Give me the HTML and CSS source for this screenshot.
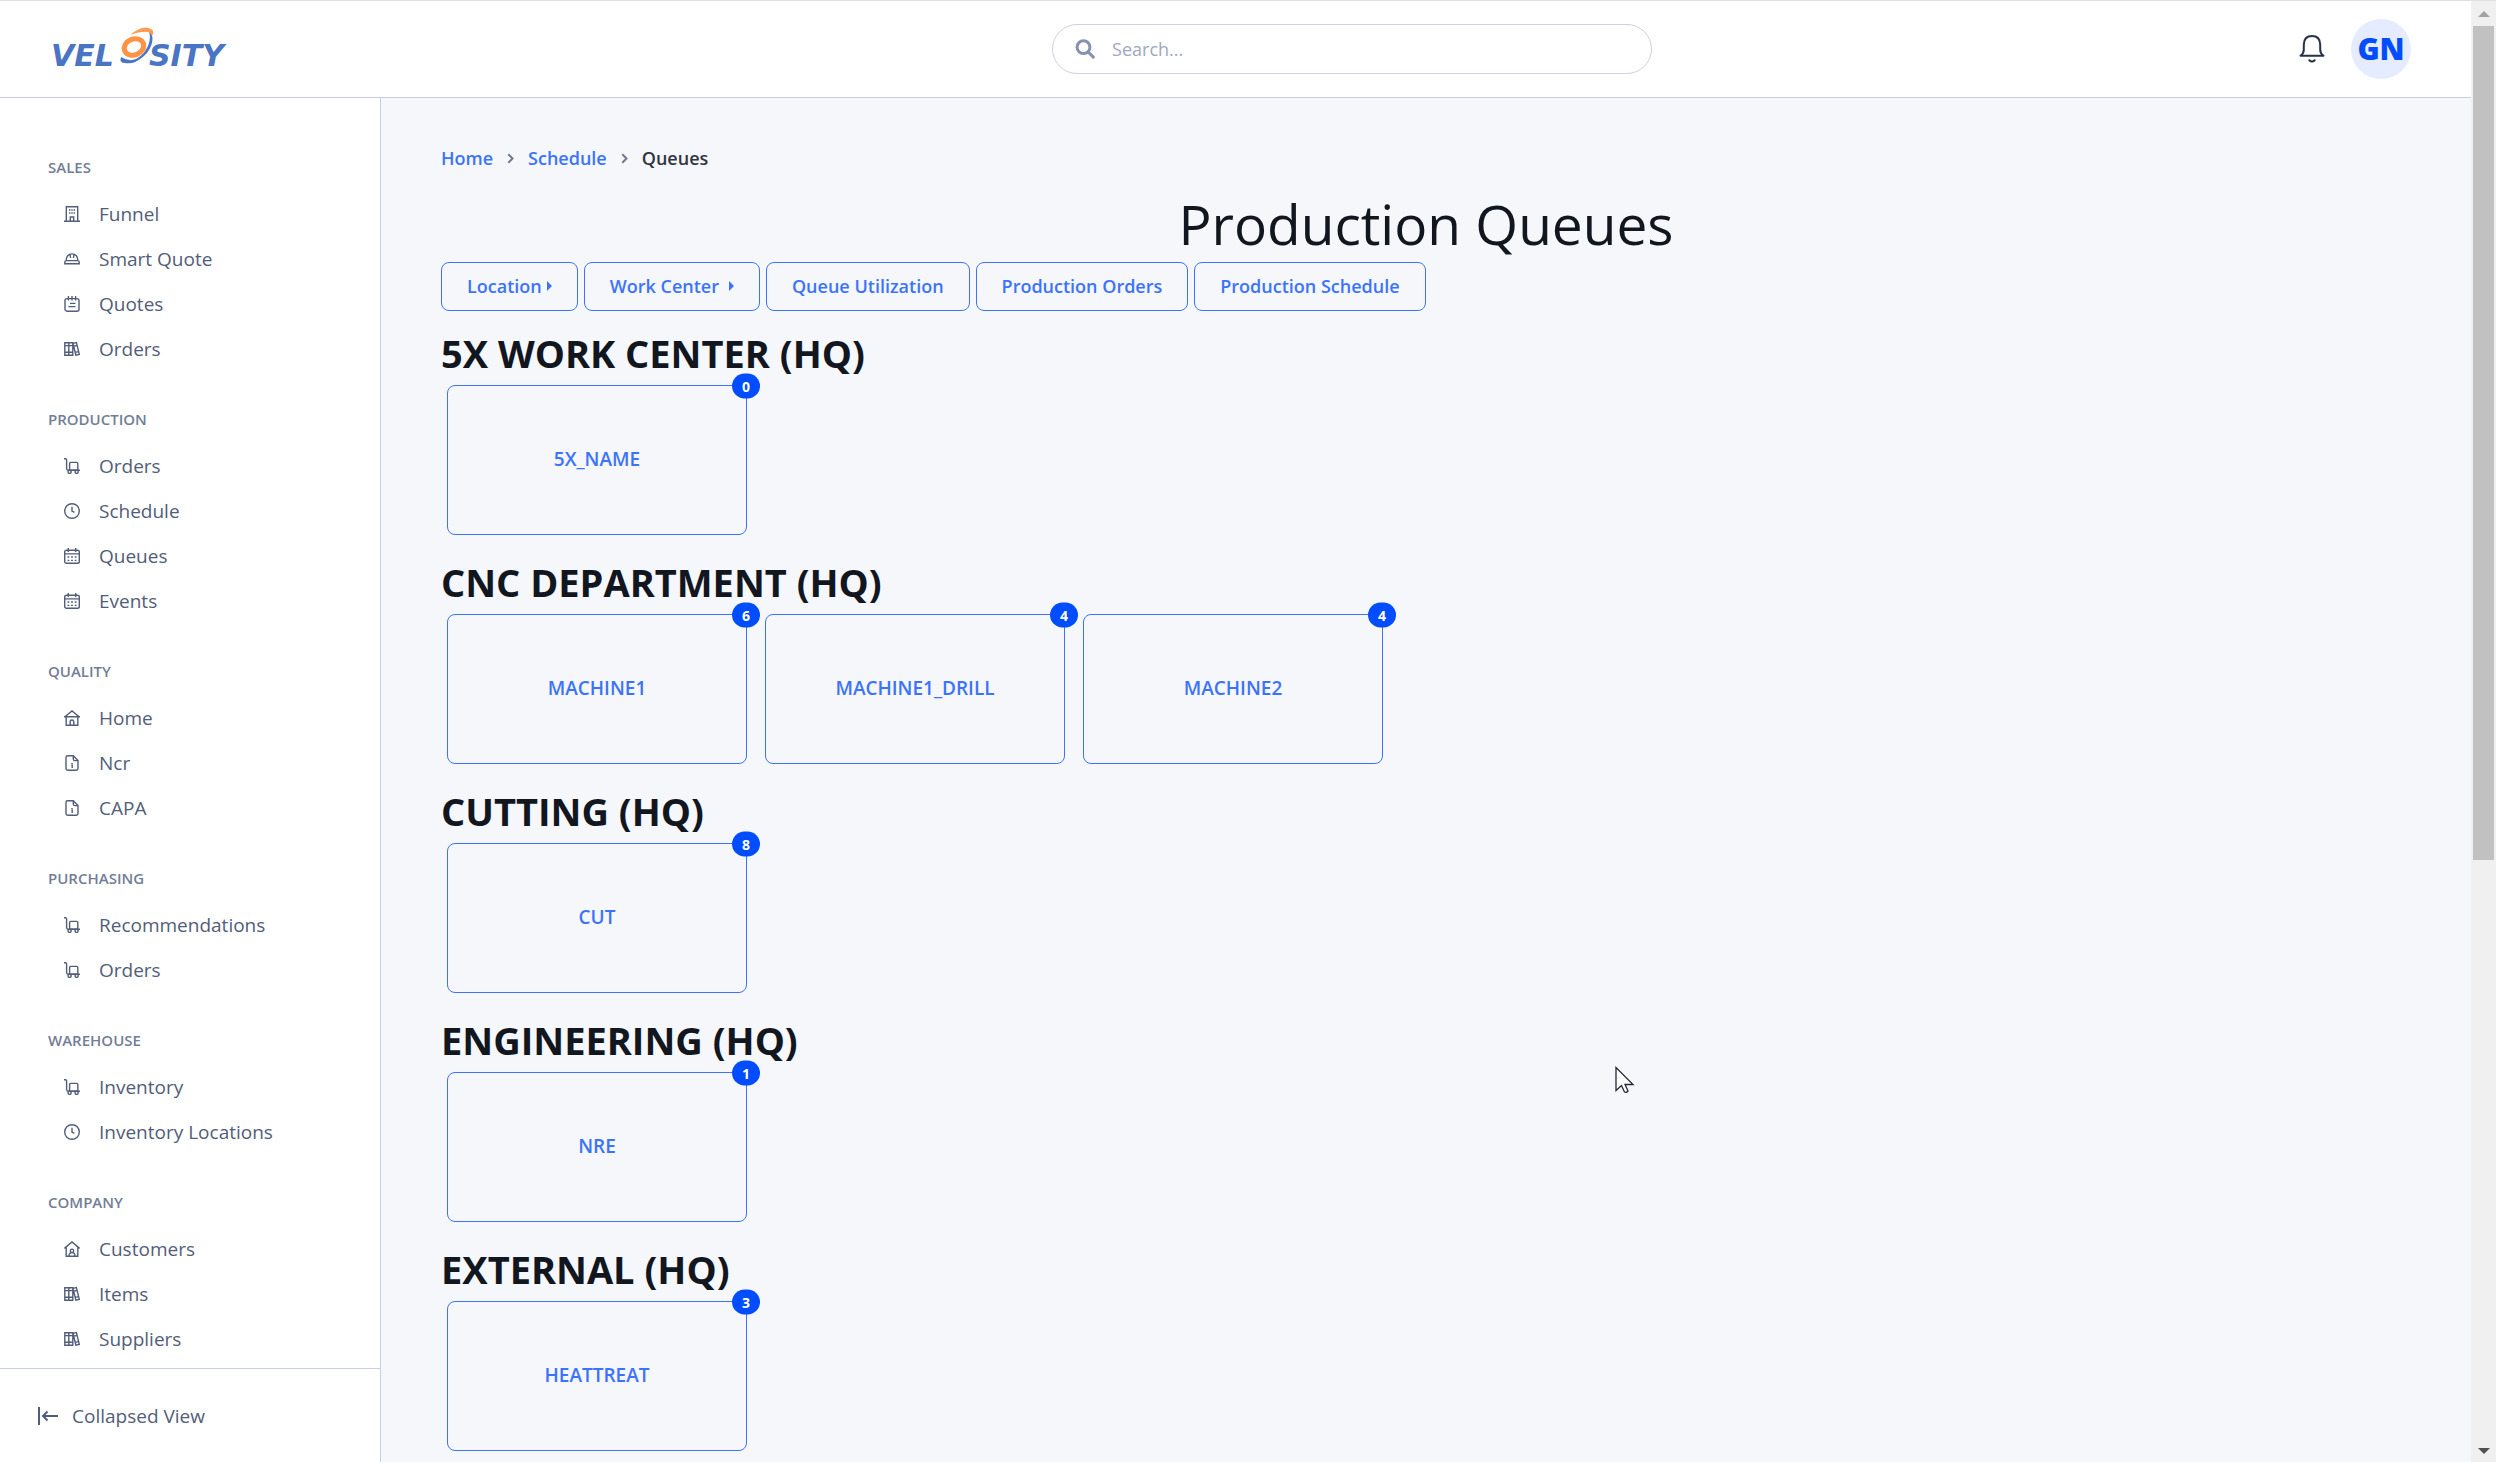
FILE: index.html
```html
<!DOCTYPE html>
<html lang="en">
<head>
<meta charset="utf-8">
<meta name="viewport" content="width=device-width, initial-scale=1">
<title>Production Queues - Velosity</title>
<link rel="stylesheet" href="styles.css">
</head>
<body>
<svg class="sprite" aria-hidden="true">
  <symbol id="i-building" viewBox="0 0 16 16"><path d="M0 15.3h16M2.3 15V.8h11.4V15M6.3 15v-4h3.4v4M5 4h1.4M7.3 4h1.4M9.6 4H11M5 7h1.4M7.3 7h1.4M9.6 7H11"/></symbol>
  <symbol id="i-hat" viewBox="0 0 16 16"><path d="M2.200 9.600Q.8 10 .8 11.200V12.800h14.400v-1.600q0-1.200-1.400-1.600zM2.200 9.600C2 5.800 4.500 2.900 8 2.900s6 2.900 5.800 6.700M6 3.300l.6 3.500M10 3.300l-.6 3.500"/></symbol>
  <symbol id="i-notes" viewBox="0 0 16 16"><rect x="1" y="2.600" width="14" height="12.600" rx="2"/><path d="M4.400 0v4.400M8 0v4.400M11.600 0v4.400M6 7.400h5.500M4.500 10.600H11.500"/></symbol>
  <symbol id="i-books" viewBox="0 0 16 16"><path d="M.8 1.800h4v12.400h-4zM4.800 1.800h4v12.400h-4zM.8 4.600h8M.8 11.200h8M9 2.400l3.400-.9 2.900 11.900-3.400.8zM9.700 5.200l3.400-.8M11.200 11.400l3.400-.8"/></symbol>
  <symbol id="i-cart" viewBox="0 0 16 16"><path d="M0 .8h1.500Q2.600.8 2.600 2v8.500q0 1.700 1.700 1.700H16"/><rect x="5.600" y="4.400" width="8.200" height="7.800" rx="1"/><circle cx="5.600" cy="13.800" r="1.600"/><circle cx="12.600" cy="13.800" r="1.600"/></symbol>
  <symbol id="i-clock" viewBox="0 0 16 16"><circle cx="8" cy="8" r="7.300"/><path d="M8 3.800V8l2.400 1.400"/></symbol>
  <symbol id="i-calendar" viewBox="0 0 16 16"><rect x=".7" y="2.200" width="14.600" height="13" rx="1.800"/><path d="M4.300 0v4M11.700 0v4M.7 5.900h14.600M3.500 9h1.800M7.100 9h1.800M10.700 9h1.800M3.500 12.400h1.800M7.100 12.400h1.800M10.700 12.400h1.800"/></symbol>
  <symbol id="i-home" viewBox="0 0 16 16"><path d="M0 6.700h16M1.200 6.500L8 .9l6.800 5.600M2.200 6.700v8.500h11.600V6.700M6.200 15v-3.200a1.800 1.800 0 0 1 3.600 0V15"/></symbol>
  <symbol id="i-file" viewBox="0 0 16 16"><path d="M9.300.8H3.600Q2 .8 2 2.400v11.200q0 1.600 1.600 1.600h8.800q1.600 0 1.600-1.600V5.600zM9.300.8v3.200q0 1.600 1.600 1.600H14M8 8v1.200M7.400 10.300H8.200V13"/></symbol>
  <symbol id="i-house-user" viewBox="0 0 16 16"><path d="M.4 7.400L8 .9l7.600 6.500M2.200 6.200v9h11.600v-9M5 15q0-3.400 3-3.400T11 15"/><circle cx="8" cy="9.800" r="1.700"/></symbol>
  <symbol id="i-chevron" viewBox="0 0 7 11"><path d="M1.300 1.200L5.500 5.500 1.300 9.800"/></symbol>
</svg>

<div class="app">
  <header class="topbar">
    <a class="logo" href="#" aria-label="Velosity">
      <svg width="192" height="48" viewBox="0 0 192 48">
        <text class="logo-text" x="5" y="41">VEL</text>
        <text class="logo-text" x="103" y="41">SITY</text>
        <path d="M102 5C107 12 102 28 90 34Q83 37 75 32Q73 38 79 38Q88 40 98 31C108 22 109 9 102 5z" fill="#4a74c4"/>
        <path d="M84 10Q97-1 105 4Q109 6 106 11Q104 3 84 10z" fill="#ff9b52"/>
        <ellipse cx="88" cy="22" rx="10" ry="8" transform="rotate(-22 88 22)" fill="none" stroke="#ff9345" stroke-width="5"/>
      </svg>
    </a>
    <form class="search" role="search">
      <svg class="search-icon" width="20" height="20" viewBox="0 0 20 20" aria-hidden="true"><circle cx="8.500" cy="8.200" r="6.400"/><path d="M13 12.800l5.300 5.300"/></svg>
      <input class="search-input" type="text" placeholder="Search..." aria-label="Search">
    </form>
    <div class="account">
      <button class="bell" type="button" aria-label="Notifications">
        <svg width="26" height="30" viewBox="0 0 26 30" aria-hidden="true"><path d="M1.500 21.800h23Q21.200 19.500 21.200 15.500V10.500Q21 2 13 2T4.800 10.500v5Q4.800 19.500 1.500 21.800zM10.300 26.200Q13 29 15.700 26.200"/></svg>
      </button>
      <button class="avatar" type="button">GN</button>
    </div>
  </header>

  <div class="body">
    <aside class="sidebar">
      <nav class="nav" aria-label="Main">
        <section class="group"><h6 class="group-title">SALES</h6>
          <a class="item" href="#"><svg class="icon"><use href="#i-building"/></svg>Funnel</a>
          <a class="item" href="#"><svg class="icon"><use href="#i-hat"/></svg>Smart Quote</a>
          <a class="item" href="#"><svg class="icon"><use href="#i-notes"/></svg>Quotes</a>
          <a class="item" href="#"><svg class="icon"><use href="#i-books"/></svg>Orders</a>
        </section>
        <section class="group"><h6 class="group-title">PRODUCTION</h6>
          <a class="item" href="#"><svg class="icon"><use href="#i-cart"/></svg>Orders</a>
          <a class="item" href="#"><svg class="icon"><use href="#i-clock"/></svg>Schedule</a>
          <a class="item" href="#"><svg class="icon"><use href="#i-calendar"/></svg>Queues</a>
          <a class="item" href="#"><svg class="icon"><use href="#i-calendar"/></svg>Events</a>
        </section>
        <section class="group"><h6 class="group-title">QUALITY</h6>
          <a class="item" href="#"><svg class="icon"><use href="#i-home"/></svg>Home</a>
          <a class="item" href="#"><svg class="icon"><use href="#i-file"/></svg>Ncr</a>
          <a class="item" href="#"><svg class="icon"><use href="#i-file"/></svg>CAPA</a>
        </section>
        <section class="group"><h6 class="group-title">PURCHASING</h6>
          <a class="item" href="#"><svg class="icon"><use href="#i-cart"/></svg>Recommendations</a>
          <a class="item" href="#"><svg class="icon"><use href="#i-cart"/></svg>Orders</a>
        </section>
        <section class="group"><h6 class="group-title">WAREHOUSE</h6>
          <a class="item" href="#"><svg class="icon"><use href="#i-cart"/></svg>Inventory</a>
          <a class="item" href="#"><svg class="icon"><use href="#i-clock"/></svg>Inventory Locations</a>
        </section>
        <section class="group"><h6 class="group-title">COMPANY</h6>
          <a class="item" href="#"><svg class="icon"><use href="#i-house-user"/></svg>Customers</a>
          <a class="item" href="#"><svg class="icon"><use href="#i-books"/></svg>Items</a>
          <a class="item" href="#"><svg class="icon"><use href="#i-books"/></svg>Suppliers</a>
        </section>
      </nav>
      <button class="collapse" type="button">
        <svg width="22" height="20" viewBox="0 0 22 20" aria-hidden="true"><path d="M2 1v18M21 10H6M10.500 5.500L6 10l4.500 4.500"/></svg>
        Collapsed View
      </button>
    </aside>

    <main class="main">
      <nav class="crumbs" aria-label="Breadcrumb">
        <a href="#">Home</a><svg class="chevron"><use href="#i-chevron"/></svg>
        <a href="#">Schedule</a><svg class="chevron"><use href="#i-chevron"/></svg>
        <span class="current">Queues</span>
      </nav>
      <h1 class="title">Production Queues</h1>
      <div class="actions">
        <button class="btn" type="button">Location<span class="caret"></span></button>
        <button class="btn btn-wide" type="button">Work Center<span class="caret"></span></button>
        <button class="btn" type="button">Queue Utilization</button>
        <button class="btn" type="button">Production Orders</button>
        <button class="btn" type="button">Production Schedule</button>
      </div>
      <section class="center"><h2 class="center-title">5X WORK CENTER (HQ)</h2>
        <div class="cards"><button class="card" type="button">5X_NAME<span class="badge">0</span></button></div>
      </section>
      <section class="center"><h2 class="center-title">CNC DEPARTMENT (HQ)</h2>
        <div class="cards">
          <button class="card" type="button">MACHINE1<span class="badge">6</span></button>
          <button class="card" type="button">MACHINE1_DRILL<span class="badge">4</span></button>
          <button class="card" type="button">MACHINE2<span class="badge">4</span></button>
        </div>
      </section>
      <section class="center"><h2 class="center-title">CUTTING (HQ)</h2>
        <div class="cards"><button class="card" type="button">CUT<span class="badge">8</span></button></div>
      </section>
      <section class="center"><h2 class="center-title">ENGINEERING (HQ)</h2>
        <div class="cards"><button class="card" type="button">NRE<span class="badge">1</span></button></div>
      </section>
      <section class="center"><h2 class="center-title">EXTERNAL (HQ)</h2>
        <div class="cards"><button class="card" type="button">HEATTREAT<span class="badge">3</span></button></div>
      </section>
    </main>
  </div>
</div>

<div class="scrollbar" aria-hidden="true">
  <span class="arrow arrow-up"></span>
  <div class="track"><div class="thumb"></div></div>
  <span class="arrow arrow-down"></span>
</div>

<svg class="pointer" width="20" height="30" viewBox="0 0 20 30" aria-hidden="true"><path d="M1 1.500v23l5.500-5 3 6.500q2 1 3.500-1l-3-6.500H18z"/></svg>
</body>
</html>
```
FILE: styles.css
```css
* { box-sizing: border-box; }

body {
  margin: 0;
  display: flex;
  height: 100vh;
  overflow: hidden;
  border-top: 1px solid #dedfe1;
  background: #f5f7fb;
  color: #12161f;
  font: 400 18px/24px "Open Sans", "Noto Sans", sans-serif;
}

button, input { font: inherit; color: inherit; }
button { cursor: pointer; }
a { color: inherit; text-decoration: none; }
h1, h2, h6 { margin: 0; }
svg { flex: none; fill: none; }

.sprite { position: absolute; width: 0; height: 0; }

.app {
  flex: 1;
  min-width: 0;
  display: flex;
  flex-direction: column;
}

/* Top bar */
.topbar {
  flex: none;
  display: grid;
  grid-template-columns: 57fr minmax(240px, 600px) 43fr;
  align-items: center;
  height: 97px;
  padding: 0 60px 0 46px;
  border-bottom: 1px solid #c8cddd;
  background: #fff;
}
.logo { display: flex; }
.logo-text {
  font: italic 700 30px "DejaVu Sans", sans-serif;
  fill: #4a74c4;
}
.search {
  display: flex;
  align-items: center;
  gap: 17px;
  height: 50px;
  padding: 0 22px;
  border: 1px solid #cdd1e0;
  border-radius: 25px;
}
.search-icon { stroke: #8790ae; stroke-width: 3; stroke-linecap: round; }
.search-input {
  flex: 1;
  min-width: 0;
  padding: 0;
  border: 0;
  outline: 0;
  background: none;
}
.search-input::placeholder { color: #a0a8c0; opacity: 1; }
.account {
  display: flex;
  justify-content: flex-end;
  align-items: center;
  gap: 26px;
}
.bell {
  display: flex;
  padding: 0;
  border: 0;
  background: none;
  stroke: #2a3146;
  stroke-width: 2;
  stroke-linejoin: round;
  stroke-linecap: round;
}
.avatar {
  width: 60px;
  height: 60px;
  padding: 0;
  border: 0;
  border-radius: 50%;
  background: #e5ecff;
  color: #004dff;
  font-size: 30px;
  font-weight: 800;
}

/* Sidebar */
.body { flex: 1; display: flex; min-height: 0; }
.sidebar {
  flex: none;
  width: 381px;
  display: flex;
  flex-direction: column;
  border-right: 1px solid #c8cfe0;
  background: #fff;
  color: #525d79;
  font-size: 19px;
}
.nav { flex: 1; min-height: 0; overflow: hidden; padding: 57px 20px 0 48px; }
.group { margin-bottom: 36px; }
.group-title {
  margin-bottom: 12px;
  color: #737d97;
  font-size: 15px;
  line-height: 24px;
  font-weight: 600;
}
.item {
  display: flex;
  align-items: center;
  gap: 19px;
  height: 45px;
  padding-left: 16px;
}
.icon {
  width: 16px;
  height: 16px;
  stroke: #525d79;
  stroke-width: 1.4;
}
.collapse {
  display: flex;
  align-items: center;
  gap: 13px;
  height: 94px;
  padding: 0 37px;
  border: 0;
  border-top: 1px solid #c8cfe0;
  background: none;
  stroke: #525d79;
  stroke-width: 2;
}

/* Main column */
.main { flex: 1; min-width: 0; padding: 48px 60px 0; overflow: hidden; }
.crumbs {
  display: flex;
  align-items: center;
  gap: 14px;
  color: #3b73ff;
  font-weight: 600;
}
.current { color: #30353f; }
.chevron { width: 7px; height: 11px; stroke: #6f7890; stroke-width: 2; }
.title {
  margin: 18px 0 0;
  padding-bottom: 2px;
  text-align: center;
  font-size: 55px;
  line-height: 72px;
  font-weight: 400;
}
.actions { display: flex; flex-wrap: wrap; gap: 6px; }
.btn {
  display: flex;
  align-items: center;
  gap: 5px;
  height: 49px;
  padding: 0 25px 2px;
  border: 1px solid #3b73ff;
  border-radius: 8px;
  background: none;
  color: #3b73ff;
  font-weight: 650;
}
.btn-wide { gap: 10px; }
.caret {
  border: 5px solid transparent;
  border-left-color: currentColor;
  border-right: 0;
}
.center-title {
  padding-top: 20px;
  margin-bottom: 9px;
  font-size: 38px;
  line-height: 45px;
  font-weight: 700;
}
.center + .center { margin-top: 5px; }
.cards { display: flex; flex-wrap: wrap; gap: 18px; padding-left: 6px; }
.card {
  position: relative;
  width: 300px;
  height: 150px;
  padding: 0 0 3px;
  border: 1px solid #3b73ff;
  border-radius: 8px;
  background: none;
  color: #3b73ff;
  font-size: 19px;
  font-weight: 600;
}
.badge {
  position: absolute;
  top: 0;
  right: 0;
  transform: translate(50%, -50%);
  padding: 0 10px;
  border-radius: 13px;
  background: #004dff;
  color: #fff;
  font-size: 14px;
  line-height: 25px;
  font-weight: 700;
}

/* Scroll bar */
.scrollbar {
  flex: none;
  width: 25px;
  display: flex;
  flex-direction: column;
  align-items: center;
  background: #f0f0f0;
}
.track { flex: 1; width: 21px; margin: 9px 0 8px; }
.thumb { height: 59%; background: #c1c1c1; }
.arrow { border: 6px solid transparent; }
.arrow-up { margin-top: 4px; border-bottom-color: #a3a3a3; }
.arrow-down { margin-bottom: 2px; border-top-color: #505050; }

.pointer {
  position: fixed;
  left: 1615px;
  top: 1066px;
  fill: #fff;
  stroke: #232838;
  stroke-width: 1.3;
}
```
